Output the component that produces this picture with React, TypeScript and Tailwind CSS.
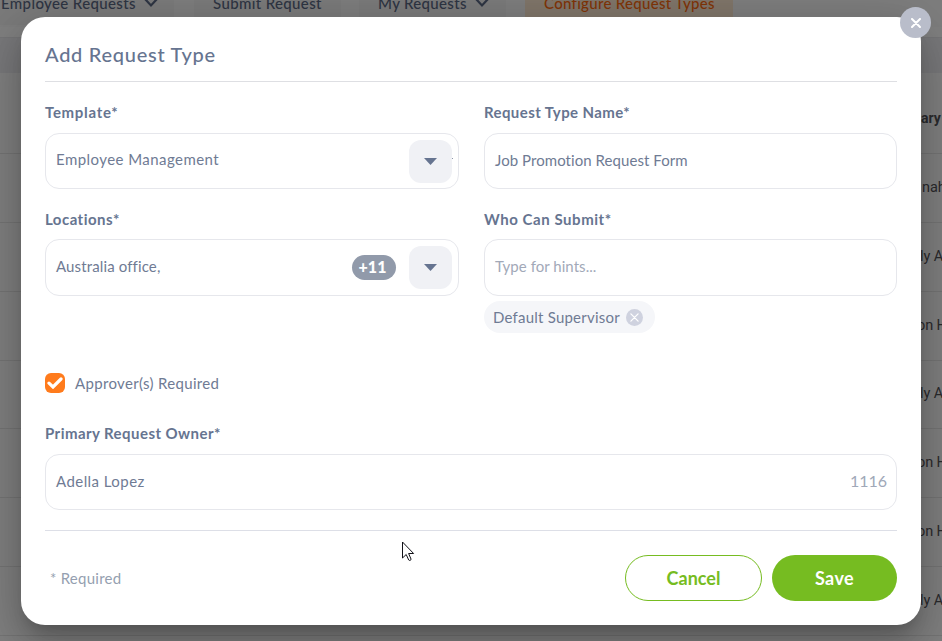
import React, { useState } from 'react';
import { clsx } from 'clsx';

const TABS = [
  { label: 'Employee Requests', menu: true, box: 'w-[174px] pl-px', text: 'tracking-[0.38px]' },
  { label: 'Submit Request', menu: false, box: 'ml-5 w-[147px] pl-[19px]', text: 'tracking-[0.37px]' },
  { label: 'My Requests', menu: true, box: 'ml-[18px] w-[147px] pl-[19px]', text: 'tracking-[0.33px]' },
  { label: 'Configure Request Types', menu: false, box: 'ml-[19px] w-[208px] pl-[19px]', text: 'tracking-[0.3px]', active: true },
];

const OWNERS = [
  { name: 'nah', cell: 'h-[69px] pl-[922px]' },
  { name: 'ly A', cell: 'h-[69px] pl-[920px]' },
  { name: 'on H', cell: 'h-[69px] pl-[917px]' },
  { name: 'ly A', cell: 'h-[68px] pl-[920px]' },
  { name: 'on H', cell: 'h-[69px] pl-[917px]' },
  { name: 'on H', cell: 'h-[69px] pl-[917px]' },
  { name: 'ly A', cell: 'h-[69px] pl-[920px]' },
];

function Chevron() {
  return (
    <svg width="16" height="10" viewBox="0 0 16 10" fill="none" className="mb-px ml-[7px]">
      <path d="M2 1 8 7.500l6-6.500" stroke="currentColor" strokeWidth="2.200" />
    </svg>
  );
}

function Cross({ size, width }: { size: number; width: number }) {
  return (
    <svg width={size} height={size} viewBox="0 0 10 10" fill="none">
      <path d="m1 1 8 8M9 1 1 9" stroke="currentColor" strokeWidth={width} strokeLinecap="round" />
    </svg>
  );
}

function Backdrop() {
  return (
    <div className="flex h-full flex-col bg-white">
      <div className="flex h-[27px] shrink-0 bg-[#fafafa]">
        {TABS.map((tab) => (
          <div
            key={tab.label}
            className={clsx(
              'flex h-[25px] shrink-0 items-start whitespace-nowrap text-[15px] font-medium',
              tab.box,
              tab.active ? 'bg-[#ffead2] text-[#ff6a10]' : 'bg-[#f4f4f4] text-[#5d6a86]'
            )}
          >
            <div className="-mt-[7px] flex h-5 items-center">
              <span className={tab.text}>{tab.label}</span>
              {tab.menu && <Chevron />}
            </div>
          </div>
        ))}
      </div>
      <div className="mt-[10px] h-9 shrink-0 border-t border-[#e8e8ec] bg-[#f1f1f5]" />
      <div className="flex flex-1 flex-col overflow-hidden font-[Roboto,sans-serif] text-[14.5px] text-[#55555a]">
        <div className="flex h-[81px] shrink-0 items-center border-b border-[#e8e8e8] pt-[10px] pl-[921px] text-sm font-bold">ary</div>
        {OWNERS.map((owner, i) => (
          <div
            key={i}
            className={clsx('flex shrink-0 items-center whitespace-pre border-b border-[#e8e8e8] pb-px tracking-[-0.1px]', owner.cell)}
          >
            {owner.name}
          </div>
        ))}
      </div>
    </div>
  );
}

function Label({ children, className }: { children: React.ReactNode; className?: string }) {
  return <div className={clsx('h-5 text-[15px] leading-[19px] font-bold text-[#667490]', className)}>{children}</div>;
}

function Field({ children, className }: { children: React.ReactNode; className?: string }) {
  return (
    <div className={clsx('relative flex items-center rounded-[14px] border border-[#e6e7ec] text-[15px] text-[#6f7b94]', className)}>
      {children}
    </div>
  );
}

function SelectArrow() {
  return (
    <button className="flex h-[43px] w-[43px] items-center justify-center rounded-xl bg-[#f0f1f5]">
      <svg width="13" height="7" viewBox="0 0 13 7">
        <path d="M0 0h13L6.5 7z" fill="#667490" />
      </svg>
    </button>
  );
}

export default function App() {
  const [approver, setApprover] = useState(true);

  return (
    <div className="relative h-[641px] w-[942px] overflow-hidden font-[Lato,sans-serif]">
      <Backdrop />

      <div className="absolute inset-0 bg-black/50 pt-[17px] pl-[21px]">
        <div className="relative flex h-[608px] w-[900px] flex-col rounded-[24px] bg-white px-6 shadow-[0_11px_15px_-7px_rgba(0,0,0,0.2),0_24px_38px_3px_rgba(0,0,0,0.14),0_9px_46px_8px_rgba(0,0,0,0.12)]">
          <button className="absolute -top-[10px] left-[879px] flex h-[31px] w-[31px] items-center justify-center rounded-full bg-[#b9bdca] text-white">
            <Cross size={10} width={2} />
          </button>

          <div className="flex h-[65px] shrink-0 items-center border-b border-[#dedfe3] pt-[10px] text-[20px] font-medium text-[#667490]">
            <span className="tracking-[0.73px]">Add Request Type</span>
          </div>

          <div className="mt-[21px] flex gap-[25px]">
            <div className="w-[414px]">
              <Label><span className="tracking-[0.7px]">Template*</span></Label>
              <Field className="mt-[10px] h-14 justify-between pr-[6px] pl-[10px]">
                <span className="mb-[3px] tracking-[0.44px]">Employee Management</span>
                <SelectArrow />
                <span className="absolute top-6 right-[5px] h-px w-px bg-[#8d96a8]" />
              </Field>
              <Label className="mt-[21px]"><span className="tracking-[0.46px]">Locations*</span></Label>
              <Field className="mt-[9px] h-[57px] pr-[6px] pl-[10px]">
                <span className="mb-[2px] tracking-[0.13px]">Australia office,</span>
                <span className="mr-[13px] ml-auto flex h-[25px] w-11 items-center justify-center rounded-full bg-[#919aaa] pr-[3px] pb-px text-base font-black text-white">
                  <span>+11</span>
                </span>
                <SelectArrow />
              </Field>
            </div>

            <div className="w-[413px]">
              <Label><span className="tracking-[0.4px]">Request Type Name*</span></Label>
              <Field className="mt-[10px] h-14 pl-[10px]">
                <span className="mb-px tracking-[0.06px]">Job Promotion Request Form</span>
              </Field>
              <Label className="mt-[21px]"><span className="tracking-[0.55px]">Who Can Submit*</span></Label>
              <Field className="mt-[9px] h-[57px] pl-[10px]">
                <span className="mb-[2px] tracking-[0.04px] text-[#a2a9b8]">Type for hints...</span>
              </Field>
              <div className="mt-[5px] flex h-8 w-[171px] items-center justify-between rounded-full bg-[#f5f6f9] pr-3 pl-[9px] text-[15px] text-[#6f7b94]">
                <span className="tracking-[0.22px]">Default Supervisor</span>
                <button className="flex h-[17px] w-[17px] items-center justify-center rounded-full bg-[#cfd2df] text-white">
                  <Cross size={9} width={1.4} />
                </button>
              </div>
            </div>
          </div>

          <div className="mt-10 flex h-5 items-center">
            <button
              onClick={() => setApprover(!approver)}
              className="flex h-5 w-5 items-center justify-center rounded-[6px] bg-[#ff7b1c]"
            >
              {approver && (
                <svg width="16" height="12" viewBox="0 0 16 12" fill="none">
                  <path d="M2 6.2 6 10l8-8" stroke="#fff" strokeWidth="3.2" strokeLinecap="round" />
                </svg>
              )}
            </button>
            <span className="ml-[10px] text-[15px] tracking-[0.33px] text-[#6f7b94]">Approver(s) Required</span>
          </div>

          <Label className="mt-[31px]"><span className="tracking-[0.44px]">Primary Request Owner*</span></Label>
          <Field className="mt-[10px] h-14 justify-between pr-[9px] pl-[10px]">
            <span className="mb-px tracking-[0.44px]">Adella Lopez</span>
            <span className="mb-[3px] text-base text-[#a0a8b8]">1116</span>
          </Field>

          <div className="mt-5 flex items-center border-t border-[#dddfe7] pt-6">
            <span className="ml-[5px] text-[15px] tracking-[0.25px] text-[#959fb0]">* Required</span>
            <button className="ml-auto h-[46px] w-[137px] rounded-full border border-[#76bc21] text-[18px] font-bold text-[#76bc21]">
              <span>Cancel</span>
            </button>
            <button className="ml-[10px] h-[46px] w-[125px] rounded-full bg-[#76bc21] text-[18px] font-bold text-white">
              <span className="tracking-[0.4px]">Save</span>
            </button>
          </div>
        </div>
      </div>

      <svg className="absolute top-[541px] left-[402px]" width="13" height="21" viewBox="0 0 13 21">
        <path d="M.5 1v16l3.7-3.500 2.500 5.500c.5 1 2.800.2 2.300-1L6.600 12.500h5z" fill="#fff" stroke="#111118" />
      </svg>
    </div>
  );
}
